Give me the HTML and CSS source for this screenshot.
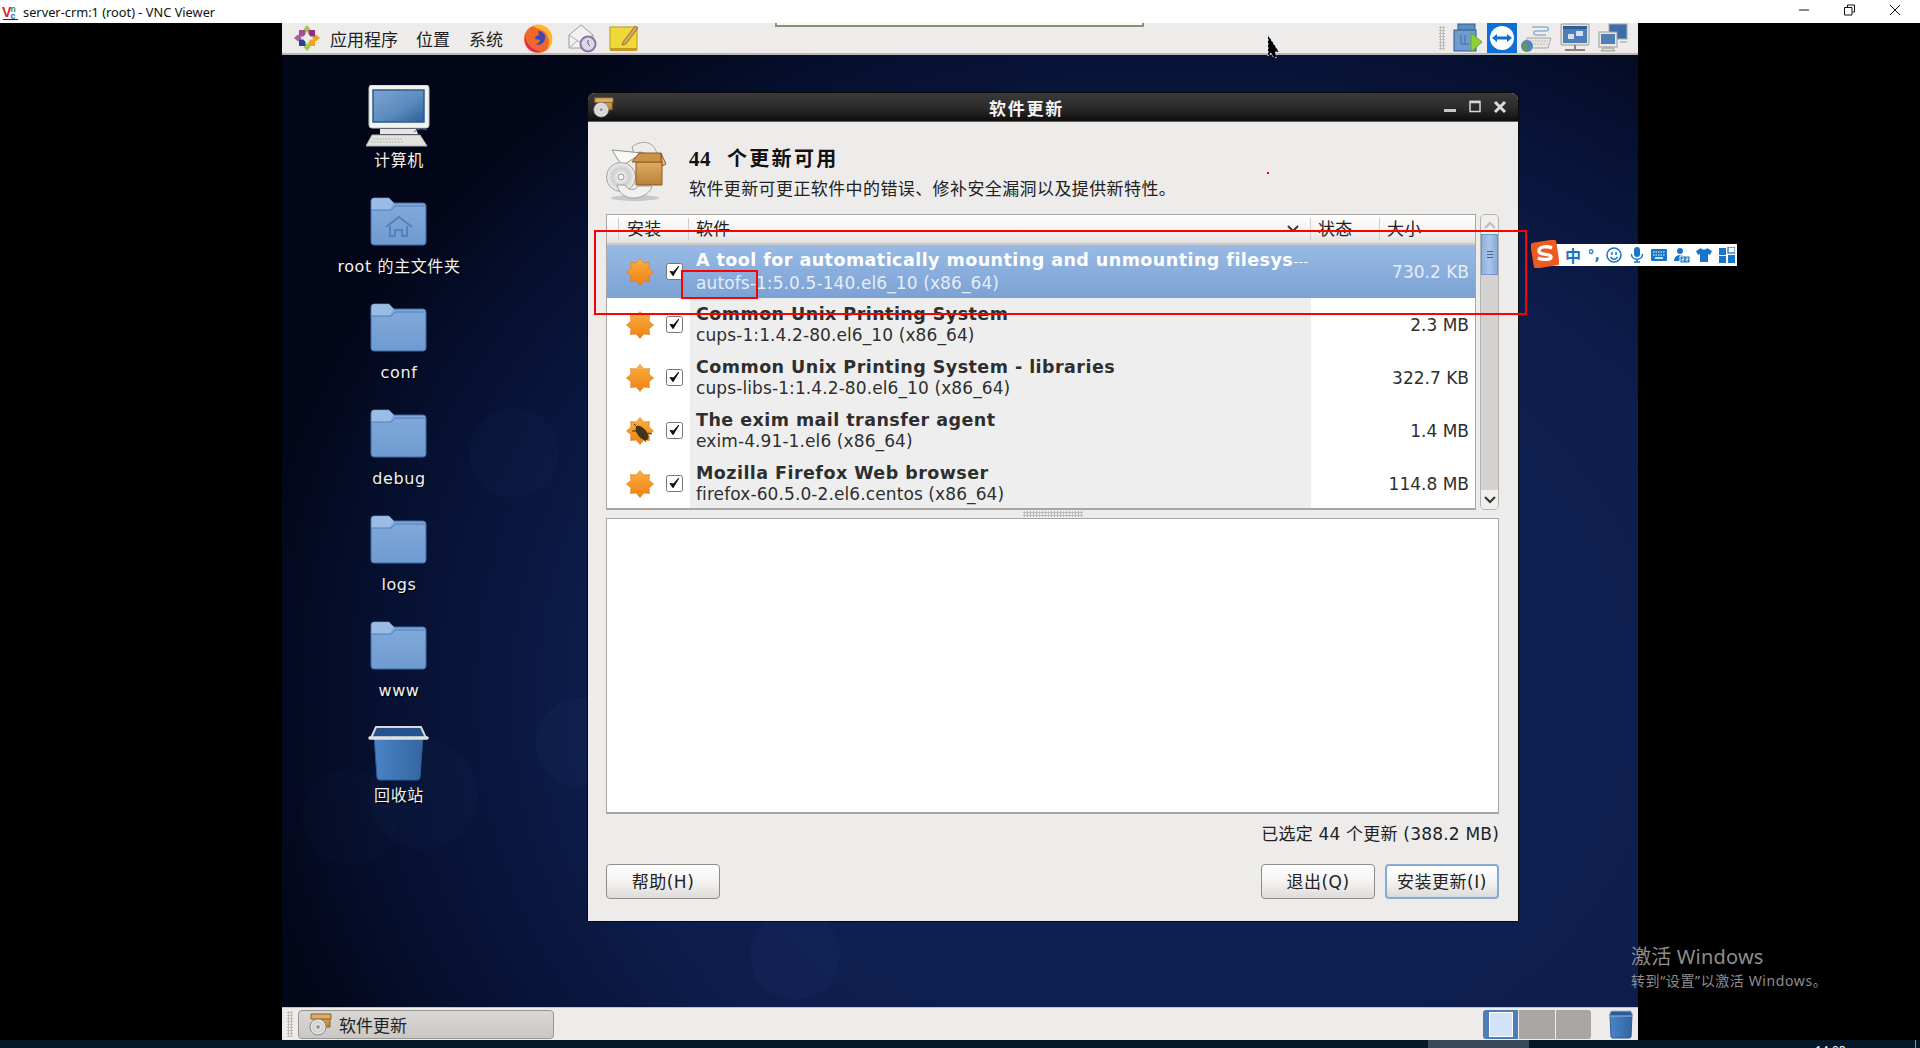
FILE: index.html
```html
<!DOCTYPE html>
<html lang="zh-CN">
<head>
<meta charset="utf-8">
<title>server-crm:1 (root) - VNC Viewer</title>
<link rel="stylesheet" href="styles.css">
</head>
<body>
<svg class="defs" width="0" height="0" aria-hidden="true">
  <defs>
    <linearGradient id="gFolder" x1="0" y1="0" x2="0" y2="1"><stop offset="0" stop-color="#84abdc"/><stop offset="1" stop-color="#6f9bd0"/></linearGradient>
    <linearGradient id="gStar" x1="0" y1="0" x2="0" y2="1"><stop offset="0" stop-color="#fbb040"/><stop offset="1" stop-color="#ef7f14"/></linearGradient>
    <linearGradient id="gScreen" x1="0" y1="0" x2="1" y2="1"><stop offset="0" stop-color="#7da3cf"/><stop offset="0.55" stop-color="#5d8cbe"/><stop offset="1" stop-color="#2c5f9a"/></linearGradient>
    <linearGradient id="gBox" x1="0" y1="0" x2="0" y2="1"><stop offset="0" stop-color="#e0ab62"/><stop offset="1" stop-color="#b9813b"/></linearGradient>
    <linearGradient id="gTrash" x1="0" y1="0" x2="1" y2="0"><stop offset="0" stop-color="#4a84c8"/><stop offset="1" stop-color="#34669f"/></linearGradient>
    <radialGradient id="gCd"><stop offset="0" stop-color="#fff"/><stop offset="0.6" stop-color="#cfcfcf"/><stop offset="1" stop-color="#f1f1f1"/></radialGradient>
    <symbol id="folder" viewBox="0 0 64 64">
      <path d="M5 10a3 3 0 0 1 3-3h15l5 5h29a3 3 0 0 1 3 3v36a3 3 0 0 1-3 3H8a3 3 0 0 1-3-3z" fill="url(#gFolder)" stroke="#3e6ba6"/>
      <path d="M5.500 19v-9a3 3 0 0 1 3-3h14l5 5-4 7h-16z" fill="#a3c3e8" opacity=".75"/>
      <path d="M6 19h19l4-4h30" fill="none" stroke="#4e7fba"/>
    </symbol>
    <symbol id="star" viewBox="0 0 28 30">
      <path d="M14 1.500L17.750 5.950 23.500 5.500 23.050 11.250 27.500 15 23.050 18.750 23.500 24.500 17.750 24.050 14 28.500 10.250 24.050 4.500 24.500 4.950 18.750 .5 15 4.950 11.250 4.500 5.500 10.250 5.950z" fill="url(#gStar)" stroke="#dc7412" stroke-width=".6"/>
    </symbol>
    <symbol id="pkg" viewBox="0 0 62 62">
      <ellipse cx="29" cy="58" rx="24" ry="3" fill="#000" opacity=".15"/>
      <path d="M26 7C34 0 48 0 51 14l-6 8C42 12 34 10 28 14z" fill="#ecece9" stroke="#a2a2a0"/>
      <path d="M6 10l30 3-20 13z" fill="#f8f8f7" stroke="#8f8f8d"/>
      <circle cx="15" cy="37" r="14.500" fill="url(#gCd)" stroke="#a0a0a0"/>
      <circle cx="15" cy="37" r="3" fill="#f4f4f4" stroke="#999"/>
      <path d="M11 45c2 9 10 14 18 13 9-1 16-6 17-12H32c-3 5-10 5-13-1z" fill="#f1f1ef" stroke="#a2a2a0"/>
      <path d="M30 22h26v23H30z" fill="url(#gBox)" stroke="#8a5d24"/>
      <path d="M26 22l7-9h22v9z" fill="#c99349" stroke="#8a5d24"/>
      <path d="M55 13l5 11-4 2v-4z" fill="#e8b977" stroke="#8a5d24"/>
    </symbol>
    <symbol id="pkgs" viewBox="0 0 24 24">
      <path d="M6 4h16v11H6z" fill="url(#gBox)" stroke="#8a5d24"/>
      <path d="M3 2h20v5H3z" fill="#e0ab62" stroke="#8a5d24"/>
      <circle cx="10" cy="15" r="8" fill="url(#gCd)" stroke="#888"/>
      <circle cx="10" cy="15" r="2" fill="#999"/>
    </symbol>
    <symbol id="check" viewBox="0 0 17 17">
      <rect x=".5" y=".5" width="16" height="16" rx="2" fill="#fff" stroke="#77756f"/>
      <path d="M4.200 8.500l2.800 4 5.500-9-4.800 5.600z" fill="#111" stroke="#111" stroke-width="1.100" stroke-linejoin="round"/>
    </symbol>
  </defs>
</svg>

<header class="vnc-bar">
  <svg class="vnc-logo" viewBox="0 0 18 18"><text x="0" y="14" class="vnc-v">V</text><text x="9" y="9" class="vnc-n">n</text><text x="9" y="16" class="vnc-c">c</text><path d="M1 17h16" stroke="#111"/></svg>
  <span class="vnc-title">server-crm:1 (root) - VNC Viewer</span>
  <div class="win-ctrls">
    <svg class="win-ctrl" viewBox="0 0 12 12"><path d="M1 6h10" stroke="#111"/></svg>
    <svg class="win-ctrl" viewBox="0 0 12 12"><path d="M3.500 3V1H10.500V8H8.500M.5 3.500H8V11H.5z" fill="none" stroke="#111"/></svg>
    <svg class="win-ctrl" viewBox="0 0 12 12"><path d="M1 1l10 10M11 1L1 11" stroke="#111"/></svg>
  </div>
</header>

<main class="remote">
  <nav class="top-panel">
    <svg class="ico-centos" viewBox="0 0 28 28">
      <path d="M14 1l3.500 4-3.500 4-3.500-4z" fill="#9ccc4b"/><path d="M14 27l3.500-4-3.500-4-3.500 4z" fill="#9ccc4b"/>
      <path d="M1 14l4-3.500 4 3.500-4 3.500z" fill="#a560a8"/><path d="M27 14l-4-3.500-4 3.500 4 3.500z" fill="#e7a61f"/>
      <path d="M6 6h6.500v4l-2 2.500H6z" fill="#a24c9a"/><path d="M22 6h-6.500v4l2 2.500H22z" fill="#932d7c"/>
      <path d="M6 22h6.500v-4l-2-2.500H6z" fill="#2f3f94"/><path d="M22 22h-6.500v-4l2-2.500H22z" fill="#e8a81c"/>
    </svg>
    <span class="menu menu-apps">应用程序</span>
    <span class="menu menu-places">位置</span>
    <span class="menu menu-system">系统</span>
    <svg class="ico-ff" viewBox="0 0 30 30">
      <circle cx="15" cy="16" r="14" fill="#f0672b"/>
      <path d="M9 3c8-4 16 0 20 10 1 6-1 11-5 14 4-8 2-18-8-21z" fill="#fcb72a"/>
      <path d="M15 8c5 0 8 4 7 8-1 5-6 7-10 5 3 0 5-2 5-4l-5-1 1-3c2 0 3-1 3-2z" fill="#3a4bb0"/>
      <path d="M2 12c1 9 7 16 16 16-6 3-15-1-16-11z" fill="#d9226e"/>
    </svg>
    <svg class="ico-mail" viewBox="0 0 30 30">
      <path d="M2 12L14 2l12 10v13H2z" fill="#f1f1ef" stroke="#9c9c9c"/>
      <path d="M2 12l12 8 12-8M2 25l9-8M26 25l-9-8" fill="none" stroke="#ababab"/>
      <circle cx="21" cy="21" r="7.500" fill="#ddd8e6" stroke="#8c72a3" stroke-width="2"/>
      <path d="M21 17v4l2 2" fill="none" stroke="#6b5480"/>
    </svg>
    <svg class="ico-note" viewBox="0 0 30 30">
      <rect x="1" y="4" width="27" height="22" fill="#efd83a" stroke="#b59c1c"/>
      <rect x="1" y="25" width="27" height="3" fill="#c89a25"/>
      <path d="M14 19l12-16 3 2-12 16-4 1z" fill="#d7a35b" stroke="#8a6430" stroke-width=".8"/>
    </svg>
    <span class="panel-fill"></span>
    <span class="handle"></span>
    <svg class="tray" viewBox="0 0 30 30">
      <rect x="5" y="1" width="17" height="17" fill="#5f8dc2" stroke="#2c5a96"/>
      <rect x="1" y="7" width="22" height="21" fill="#6f9bcf" stroke="#2c5a96"/>
      <path d="M8 12v9h8M12 12v9" fill="none" stroke="#3d6ea9"/>
      <path d="M18 10l11 9-11 10z" fill="#8fcf3c" stroke="#6aa527"/>
    </svg>
    <svg class="tray tray-tv" viewBox="0 0 30 30">
      <rect width="30" height="30" fill="#0e6fd6"/>
      <circle cx="15" cy="15" r="12" fill="#fff"/>
      <path d="M5 15l5-4v2.500h10V11l5 4-5 4v-2.500H10V19z" fill="#0e6fd6"/>
    </svg>
    <svg class="tray tray-wide" viewBox="0 0 32 30">
      <path d="M12 4h14c3 0 3 4 0 4H16c-3 0-3 4 0 4h10" fill="none" stroke="#8fb1d6" stroke-width="1.500"/>
      <path d="M7 15h24l-3 10H4z" fill="#e6e6e3" stroke="#a5a5a2"/>
      <path d="M9 18h19M8 21h19" stroke="#b8b8b5" stroke-dasharray="2 1"/>
      <circle cx="7" cy="23" r="6" fill="#4f87bb"/><path d="M3 21c3-2 5 0 4 3s2 2 3 1c-1 3-4 4-6 2z" fill="#6f9b3e"/>
    </svg>
    <svg class="tray" viewBox="0 0 30 30">
      <rect x="1" y="1" width="28" height="21" rx="1" fill="#e3e3e0" stroke="#9a9a97"/>
      <rect x="3" y="3" width="24" height="17" fill="#4f7eb6"/>
      <rect x="3" y="3" width="24" height="3" fill="#2f5d98"/>
      <rect x="8" y="11" width="6" height="5" fill="#d4e0ef"/><rect x="16" y="8" width="7" height="5" fill="#d4e0ef"/>
      <path d="M15 22v6M5 27h20" stroke="#85847f" stroke-width="2"/>
    </svg>
    <svg class="tray" viewBox="0 0 30 30">
      <rect x="11" y="1" width="18" height="15" fill="#3d6ea9" stroke="#a9a9a6"/>
      <rect x="1" y="9" width="18" height="15" fill="#e8e8e5" stroke="#9a9a97"/>
      <rect x="3" y="11" width="14" height="10" fill="#4f7eb6"/>
      <path d="M3 28h14l-2-3H5zM22 19h7" fill="#dcdcd9" stroke="#9a9a97"/>
    </svg>
  </nav>

  <section class="desktop">
    <ul class="icons">
      <li class="icon">
        <svg class="ico64" viewBox="0 0 64 64">
          <rect x="3" y="0" width="60" height="43" rx="3" fill="#f3f3f1" stroke="#c6c6c4"/>
          <rect x="7" y="5" width="51" height="32" fill="url(#gScreen)" stroke="#2e5a93" stroke-width="1.500"/>
          <path d="M14 44h36l2 5H14z" fill="#e6e6e3"/>
          <path d="M6 50h48l7 11H0z" fill="#e2e2df" stroke="#b0b0ad"/>
          <path d="M7 54h30M5 57h32" stroke="#b6b6b2" stroke-dasharray="2 1"/>
          <path d="M48 47c3-3 8-4 13-2" fill="none" stroke="#46689c"/>
        </svg>
        <span class="icon-label">计算机</span>
      </li>
      <li class="icon">
        <svg class="ico64" viewBox="0 0 64 64">
          <use href="#folder"/>
          <path d="M20 36l13-10 13 10M24 35v10h5v-6h7v6h5V35" fill="none" stroke="#4f82bf" stroke-width="2"/>
        </svg>
        <span class="icon-label">root 的主文件夹</span>
      </li>
      <li class="icon"><svg class="ico64"><use href="#folder"/></svg><span class="icon-label">conf</span></li>
      <li class="icon"><svg class="ico64"><use href="#folder"/></svg><span class="icon-label">debug</span></li>
      <li class="icon"><svg class="ico64"><use href="#folder"/></svg><span class="icon-label">logs</span></li>
      <li class="icon"><svg class="ico64"><use href="#folder"/></svg><span class="icon-label">www</span></li>
      <li class="icon">
        <svg class="ico64" viewBox="0 0 64 64">
          <path d="M8 15h49l-3 43a3 3 0 0 1-3 2H14a3 3 0 0 1-3-2z" fill="url(#gTrash)" stroke="#2f5d98"/>
          <path d="M10 7h45l5 11H5z" fill="#24528f" stroke="#d9d9d6" stroke-width="2"/>
          <path d="M4 18h57" stroke="#e2e2df" stroke-width="3.500" stroke-linecap="round"/>
        </svg>
        <span class="icon-label">回收站</span>
      </li>
    </ul>

    <article class="window">
      <div class="titlebar">
        <svg class="title-ico"><use href="#pkgs"/></svg>
        <span class="title-text">软件更新</span>
        <div class="title-ctrls">
          <svg class="tc" viewBox="0 0 14 14"><rect x="1" y="9" width="12" height="3" fill="#c8c8c8"/></svg>
          <svg class="tc" viewBox="0 0 14 14"><path d="M2 1.500h10v10H2z" fill="none" stroke="#d8d8d8" stroke-width="1.500"/><path d="M2 2h10" stroke="#d8d8d8" stroke-width="2.500"/></svg>
          <svg class="tc" viewBox="0 0 14 14"><path d="M2 2l10 10M12 2L2 12" stroke="#dcdcdc" stroke-width="3"/></svg>
        </div>
      </div>
      <div class="win-body">
        <div class="hero">
          <svg class="hero-ico"><use href="#pkg"/></svg>
          <div class="hero-text">
            <h1 class="hero-title"><span class="hero-num">44</span>个更新可用</h1>
            <p class="hero-sub">软件更新可更正软件中的错误、修补安全漏洞以及提供新特性。</p>
          </div>
        </div>

        <div class="list-wrap">
          <div class="tree">
            <div class="tree-head">
              <span class="th th-install">安装</span>
              <span class="th th-soft">软件<svg class="sort" viewBox="0 0 12 8"><path d="M1 1l5 5 5-5" fill="none" stroke="#333" stroke-width="1.800"/></svg></span>
              <span class="th th-state">状态</span>
              <span class="th th-size">大小</span>
            </div>
            <div class="row selected">
              <div class="cell-ic"><svg class="star"><use href="#star"/></svg><svg class="cb"><use href="#check"/></svg></div>
              <div class="cell-sw"><b class="pkg-name">A tool for automatically mounting and unmounting filesys<span class="ell">---</span></b><span class="pkg-ver">autofs-1:5.0.5-140.el6_10 (x86_64)</span></div>
              <div class="cell-sz">730.2 KB</div>
            </div>
            <div class="row">
              <div class="cell-ic"><svg class="star"><use href="#star"/></svg><svg class="cb"><use href="#check"/></svg></div>
              <div class="cell-sw"><b class="pkg-name">Common Unix Printing System</b><span class="pkg-ver">cups-1:1.4.2-80.el6_10 (x86_64)</span></div>
              <div class="cell-sz">2.3 MB</div>
            </div>
            <div class="row">
              <div class="cell-ic"><svg class="star"><use href="#star"/></svg><svg class="cb"><use href="#check"/></svg></div>
              <div class="cell-sw"><b class="pkg-name">Common Unix Printing System - libraries</b><span class="pkg-ver">cups-libs-1:1.4.2-80.el6_10 (x86_64)</span></div>
              <div class="cell-sz">322.7 KB</div>
            </div>
            <div class="row">
              <div class="cell-ic"><svg class="star" viewBox="0 0 28 30"><use href="#star"/><g fill="#3f3420" stroke="#3f3420"><ellipse cx="16" cy="17" rx="4" ry="8" transform="rotate(-40 16 17)"/><path d="M8 8l4 4M6 15l5 0M20 26l-3-4M26 18l-4-1" fill="none"/></g></svg><svg class="cb"><use href="#check"/></svg></div>
              <div class="cell-sw"><b class="pkg-name">The exim mail transfer agent</b><span class="pkg-ver">exim-4.91-1.el6 (x86_64)</span></div>
              <div class="cell-sz">1.4 MB</div>
            </div>
            <div class="row">
              <div class="cell-ic"><svg class="star"><use href="#star"/></svg><svg class="cb"><use href="#check"/></svg></div>
              <div class="cell-sw"><b class="pkg-name">Mozilla Firefox Web browser</b><span class="pkg-ver">firefox-60.5.0-2.el6.centos (x86_64)</span></div>
              <div class="cell-sz">114.8 MB</div>
            </div>
          </div>
          <div class="scrollbar">
            <div class="sb-btn"><svg class="sb-arrow" viewBox="0 0 12 8"><path d="M1 7l5-5 5 5" fill="none" stroke="#bdbcba" stroke-width="2"/></svg></div>
            <div class="sb-thumb"><i></i><i></i><i></i></div>
            <div class="sb-trough"></div>
            <div class="sb-btn"><svg class="sb-arrow" viewBox="0 0 12 8"><path d="M1 1l5 5 5-5" fill="none" stroke="#333" stroke-width="2"/></svg></div>
          </div>
        </div>

        <div class="pane-handle"><span class="pane-dots"></span></div>
        <div class="details"></div>
        <div class="summary">已选定 44 个更新 (388.2 MB)</div>
        <div class="actions">
          <button class="btn">帮助(H)</button>
          <span class="panel-fill"></span>
          <button class="btn">退出(Q)</button>
          <button class="btn btn-focus">安装更新(I)</button>
        </div>
      </div>
    </article>
  </section>

  <footer class="bottom-panel">
    <span class="handle handle-low"></span>
    <div class="task">
      <svg class="task-ico"><use href="#pkgs"/></svg>
      <span class="task-text">软件更新</span>
    </div>
    <span class="panel-fill"></span>
    <div class="pager">
      <span class="ws ws-on"><i></i></span>
      <span class="ws"></span>
      <span class="ws"></span>
    </div>
    <svg class="trash-mini" viewBox="0 0 26 30">
      <path d="M2 6h22l-1 22a2 2 0 0 1-2 1H5a2 2 0 0 1-2-1z" fill="url(#gTrash)" stroke="#2f5d98"/>
      <path d="M3 2h20l2 5H1z" fill="#2a5a98" stroke="#9fb7d3"/>
    </svg>
  </footer>
</main>

<div class="win-strip">
  <span class="strip-active"></span>
  <span class="strip-clock">14:08</span>
  <span class="strip-edge"></span>
</div>

<!-- overlays that sit on top of the remote session -->
<div class="vnc-tab"></div>
<svg class="cursor" viewBox="0 0 13 25"><path d="M1 1v21l3-3 3 5 3-1-2-5h4z" fill="#000" stroke="#fff" stroke-width=".8" stroke-dasharray="2 2"/></svg>
<span class="red-dot"></span>
<div class="mark mark-row"></div>
<div class="mark mark-name"></div>

<div class="activate">
  <div class="act-1">激活 Windows</div>
  <div class="act-2">转到“设置”以激活 Windows。</div>
</div>

<div class="sogou">
  <svg class="sg-logo" viewBox="0 0 28 28">
    <rect x="1" y="1" width="26" height="26" rx="3" transform="rotate(-9 14 14)" fill="#ee5a22"/>
    <path d="M21 8c-4-2-13-2-13 3 0 5 12 2 12 6 0 3-8 3-13 1" fill="none" stroke="#fff" stroke-width="3.400"/>
  </svg>
  <span class="sg-zh">中</span>
  <span class="sg-punct">°,</span>
  <svg class="sg" viewBox="0 0 16 16"><circle cx="8" cy="8" r="7" fill="none" stroke="#1a75c9" stroke-width="1.500"/><path d="M6 5v3M10 5v3" stroke="#1a75c9" stroke-width="1.500"/><path d="M4.500 10c2 3 5 3 7 0" fill="none" stroke="#1a75c9" stroke-width="1.500"/></svg>
  <svg class="sg" viewBox="0 0 16 16"><rect x="5" y="0" width="6" height="10" rx="3" fill="#1a75c9"/><path d="M2.500 7c0 7 11 7 11 0M8 12v3M5 15h6" fill="none" stroke="#1a75c9" stroke-width="1.500"/></svg>
  <svg class="sg" viewBox="0 0 16 16"><rect x="0" y="2" width="16" height="12" rx="1" fill="#1a75c9"/><path d="M2 5h12M2 8h12" stroke="#fff" stroke-dasharray="1.500 1"/><path d="M4 11h8" stroke="#fff" stroke-width="1.500"/></svg>
  <svg class="sg" viewBox="0 0 16 16"><circle cx="6" cy="4" r="3" fill="#1a75c9"/><path d="M0 14c0-8 12-8 12 0z" fill="#1a75c9"/><rect x="6" y="9" width="10" height="7" fill="#1a75c9" stroke="#fff"/><path d="M8 11h2v1.500H8V14h2M12 11h2v1.500h-2V14h2" fill="none" stroke="#fff" stroke-width=".8"/></svg>
  <svg class="sg" viewBox="0 0 16 16"><path d="M5 1L0 4l2 4 2-1v8h8V7l2 1 2-4-5-3c-1 2-5 2-6 0z" fill="#1a75c9"/></svg>
  <svg class="sg" viewBox="0 0 16 16"><rect x="0" y="1" width="7" height="7" fill="#1a75c9"/><rect x="9" y="0" width="7" height="6" fill="none" stroke="#1a75c9" stroke-width="1.300"/><rect x="0" y="9" width="7" height="7" fill="#1a75c9"/><rect x="9" y="8" width="7" height="8" fill="#1a75c9"/></svg>
</div>
</body>
</html>
```
FILE: styles.css
```css
* { box-sizing: border-box; }
html, body { margin: 0; padding: 0; }
body {
  width: 1920px;
  height: 1048px;
  overflow: hidden;
  position: relative;
  background: #000;
  display: flex;
  flex-direction: column;
  font-family: "DejaVu Sans", "Noto Sans CJK SC", sans-serif;
  color: #2e2e2e;
}
.defs { position: absolute; }
h1, p, ul { margin: 0; padding: 0; }
ul { list-style: none; }

/* VNC viewer chrome */
.vnc-bar {
  height: 23px;
  flex: none;
  background: #fff;
  display: flex;
  align-items: center;
  padding-left: 2px;
}
.vnc-logo { width: 17px; height: 18px; flex: none; }
.vnc-v { font: bold 15px "Liberation Sans", sans-serif; fill: #d8262c; }
.vnc-n { font: bold 9px "Liberation Sans", sans-serif; fill: #1c9a3c; }
.vnc-c { font: bold 9px "Liberation Sans", sans-serif; fill: #1f5fd0; }
.vnc-title {
  margin-left: 4px;
  font: 12.800px "Noto Sans", "Open Sans", sans-serif;
  color: #111;
}
.win-ctrls { margin-left: auto; display: flex; gap: 33.500px; padding-right: 19px; }
.win-ctrl { width: 12px; height: 12px; margin-top: -3px; }

.remote {
  width: 1356px;
  height: 1017px;
  flex: none;
  margin-left: 282px;
  display: flex;
  flex-direction: column;
}

/* Top panel */
.top-panel {
  height: 32px;
  flex: none;
  background: #edeceb;
  border-bottom: 2px solid #b9b8b6;
  display: flex;
  align-items: center;
  padding-left: 11px;
}
.ico-centos { width: 28px; height: 28px; flex: none; }
.menu { font-size: 17px; color: #222; white-space: nowrap; }
.menu-apps { margin-left: 9px; }
.menu-places { margin-left: 18px; }
.menu-system { margin-left: 19px; }
.ico-ff { width: 30px; height: 30px; margin-left: 20px; flex: none; }
.ico-mail { width: 30px; height: 30px; margin-left: 14px; flex: none; }
.ico-note { width: 30px; height: 30px; margin-left: 12px; flex: none; }
.panel-fill { flex: 1; }
.handle {
  width: 6px;
  height: 24px;
  flex: none;
  background-image: radial-gradient(#bdbcba 1px, transparent 1.2px);
  background-size: 3px 3px;
}
.tray { width: 30px; height: 30px; margin-left: 8px; flex: none; }
.tray-tv { margin-left: 4px; }
.tray-wide { width: 32px; margin-left: 3px; }
.top-panel .tray:last-child { margin-right: 10px; }

/* Desktop */
.desktop {
  flex: 1;
  position: relative;
  overflow: hidden;
  background:
    radial-gradient(circle 45px at 232px 398px, rgba(120,150,230,.025) 98%, transparent),
    radial-gradient(circle 45px at 513px 900px, rgba(120,150,230,.03) 98%, transparent),
    radial-gradient(circle 55px at 141px 740px, rgba(120,150,230,.025) 98%, transparent),
    radial-gradient(circle 48px at 68px 762px, rgba(120,150,230,.015) 98%, transparent),
    radial-gradient(circle 45px at 298px 688px, rgba(120,150,230,.03) 98%, transparent),
    radial-gradient(ellipse 950px 800px at 900px 640px, #10245a 0%, #0d1d4d 60%, #061030 85%, #030618 100%),
    #030618;
}
.icons {
  width: 160px;
  margin-left: 37px;
  padding-top: 30px;
  display: flex;
  flex-direction: column;
  gap: 18px;
}
.icon { display: flex; flex-direction: column; align-items: center; }
.icon:last-child { margin-top: -1px; }
.ico64 { width: 64px; height: 64px; display: block; margin-right: 2px; }
.icon-label {
  height: 24px;
  line-height: 23px;
  font-size: 16px;
  letter-spacing: .6px;
  color: #f2f2f2;
  white-space: nowrap;
  text-shadow: 1px 1px 1px #000;
}

/* Window */
.window {
  position: absolute;
  left: 306px;
  top: 38px;
  width: 930px;
  height: 828px;
  background: #edeceb;
  border-radius: 7px 7px 0 0;
  box-shadow: 0 0 0 1px #0a0a0a;
  display: flex;
  flex-direction: column;
}
.titlebar {
  height: 29px;
  flex: none;
  background: linear-gradient(#3a3a3a, #2a2a2a 55%, #0e0e0e);
  border-radius: 7px 7px 0 0;
  border-bottom: 1px solid #55606c;
  display: flex;
  align-items: center;
  padding: 0 11px 0 4px;
}
.title-ico { width: 22px; height: 22px; flex: none; }
.title-text {
  flex: 1;
  text-align: center;
  padding-right: 4px;
  font-size: 17px;
  font-weight: 700;
  letter-spacing: 1.800px;
  color: #f4f4f4;
}
.title-ctrls { display: flex; gap: 11px; }
.tc { width: 14px; height: 14px; }
.win-body { flex: 1; padding: 18px 19px 22px 18px; display: flex; flex-direction: column; }

.hero { height: 60px; display: flex; flex: none; }
.hero-ico { width: 62px; height: 62px; flex: none; }
.hero-text { margin-left: 21px; }
.hero-title { font-size: 20px; font-weight: 700; letter-spacing: 2.300px; color: #111; line-height: 26px; margin-top: 6px; }
.hero-num { margin-right: 16px; font-family: "Liberation Serif", "Noto Sans CJK SC", serif; font-size: 21px; letter-spacing: .5px; }
.hero-sub { font-size: 17px; letter-spacing: .4px; line-height: 24px; margin-top: 5px; color: #222; white-space: nowrap; }

.list-wrap { height: 296px; margin-top: 14px; flex: none; display: flex; gap: 4px; }
.tree {
  flex: 1;
  background: #fff;
  border: 1px solid #a8a6a3;
  border-bottom-width: 2px;
  overflow: hidden;
}
.tree-head {
  height: 30px;
  display: grid;
  grid-template-columns: 81px 622px 69px 95px;
  align-items: center;
  background: linear-gradient(#fff, #f0efee 70%, #e2e1df);
  border-bottom: 2px solid #c9c8c6;
}
.th {
  height: 22px;
  line-height: 22px;
  font-size: 17px;
  letter-spacing: .3px;
  color: #222;
  display: flex;
  align-items: center;
  border-left: 1px solid #cfcecc;
  padding-left: 7px;
}
.th-install { margin-left: 11px; padding-left: 8px; }
.th-soft { padding-right: 11px; justify-content: space-between; }
.sort { width: 12px; height: 8px; }
.row {
  height: 53px;
  display: grid;
  grid-template-columns: 83px 621px 163px;
}
.cell-ic { display: flex; align-items: center; padding-left: 19px; gap: 12px; }
.star { width: 28px; height: 30px; flex: none; }
.cb { width: 17px; height: 17px; flex: none; }
.cell-sw {
  background: #eeeeee;
  padding-left: 6px;
  display: flex;
  flex-direction: column;
  justify-content: center;
  white-space: nowrap;
  overflow: hidden;
}
.pkg-name { font-size: 17.500px; font-weight: 700; line-height: 22px; letter-spacing: .45px; }
.ell { font-weight: 400; font-size: 13px; }
.pkg-ver { font-size: 17px; line-height: 21px; letter-spacing: .1px; }
.cell-sz { display: flex; align-items: center; justify-content: flex-end; padding-right: 5px; font-size: 17px; }
.selected { background: linear-gradient(#99bae5, #7ba2d4); color: #fff; }
.selected .cell-sw { background: transparent; }
.selected .pkg-ver, .selected .cell-sz { color: #e6edf7; }

.scrollbar {
  width: 19px;
  flex: none;
  display: flex;
  flex-direction: column;
  background: #d4d3d1;
  border: 1px solid #b4b3b0;
  border-radius: 5px;
  overflow: hidden;
}
.sb-btn { height: 19px; flex: none; background: #f0efee; display: flex; align-items: center; justify-content: center; }
.sb-arrow { width: 12px; height: 8px; }
.sb-thumb {
  height: 41px;
  flex: none;
  background: linear-gradient(90deg, #8fb2e0, #a9c5ea 50%, #86aada);
  border: 1px solid #6f96c9;
  display: flex;
  flex-direction: column;
  align-items: center;
  justify-content: center;
  gap: 2px;
}
.sb-thumb i { width: 6px; height: 1px; background: #44607f; }
.sb-trough { flex: 1; }

.pane-handle { height: 8px; flex: none; display: flex; justify-content: center; align-items: center; }
.pane-dots {
  width: 60px;
  height: 6px;
  background-image: radial-gradient(#bdbcba 1px, transparent 1.2px);
  background-size: 3px 3px;
}
.details { height: 296px; flex: none; background: #fff; border: 1px solid #a8a6a3; border-bottom-width: 2px; }
.summary { height: 38px; flex: none; line-height: 40px; text-align: right; font-size: 17px; letter-spacing: .2px; color: #222; white-space: nowrap; }
.actions { margin-top: 12px; height: 35px; display: flex; gap: 10px; flex: none; }
.btn {
  width: 114px;
  height: 35px;
  padding: 0 0 2px;
  font: 17px "DejaVu Sans", "Noto Sans CJK SC", sans-serif;
  letter-spacing: .5px;
  color: #222;
  background: linear-gradient(#fff, #f4f3f2 50%, #dedcda);
  border: 1px solid #8f8d8a;
  border-radius: 4px;
}
.btn-focus { border: 2px solid #86a9d6; }

/* Bottom panel */
.bottom-panel {
  height: 33px;
  flex: none;
  background: #edeceb;
  border-top: 1px solid #c4c3c1;
  display: flex;
  align-items: center;
  padding-left: 5px;
}
.handle-low { width: 6px; height: 26px; }
.task {
  width: 256px;
  height: 29px;
  margin-left: 5px;
  flex: none;
  background: linear-gradient(#d8d7d5, #c9c8c5);
  border: 1px solid #96958f;
  border-radius: 4px;
  display: flex;
  align-items: center;
  padding-left: 9px;
}
.task-ico { width: 24px; height: 24px; flex: none; }
.task-text { margin-left: 7px; font-size: 17px; color: #222; }
.pager {
  width: 108px;
  height: 29px;
  flex: none;
  display: flex;
  gap: 1px;
  background: #edeceb;
  border-radius: 3px;
  overflow: hidden;
}
.ws { flex: 1; background: #a8a5a2; }
.ws-on { background: #4f7db5; display: flex; align-items: center; justify-content: center; }
.ws-on i { width: 24px; height: 25px; background: #d3e3f7; border: 1px solid #fff; }
.trash-mini { width: 26px; height: 30px; margin: 0 4px 0 17px; flex: none; }

/* Host task bar sliver */
.win-strip {
  height: 8px;
  flex: none;
  background: #051829;
  display: flex;
  overflow: hidden;
  position: relative;
}
.strip-active { width: 101px; margin-left: 1428px; background: #38495c; }
.strip-clock { margin-left: 286px; font: 12px "Noto Sans", sans-serif; color: #fff; line-height: 12px; padding-top: 5px; }
.strip-edge { width: 1px; margin-left: 69px; background: #8a99a8; }

/* Overlays */
.vnc-tab {
  position: absolute;
  left: 775px;
  top: 23px;
  width: 369px;
  height: 4px;
  background: #fdfbd8;
  border: 2px solid #8a8a88;
  border-top: 0;
}
.cursor { position: absolute; left: 1267px; top: 34px; width: 13px; height: 25px; }
.red-dot { position: absolute; left: 1267px; top: 172px; width: 2px; height: 2px; background: #f00; }
.mark { position: absolute; border: 2px solid #f00; }
.mark-row { left: 594px; top: 230px; width: 933px; height: 85px; }
.mark-name { left: 681px; top: 270px; width: 77px; height: 29px; }

.activate { position: absolute; left: 1631px; top: 943px; color: #8e8e8e; white-space: nowrap; font-family: "Noto Sans", "Noto Sans CJK SC", sans-serif; }
.act-1 { font-size: 20px; line-height: 28px; letter-spacing: .2px; }
.act-2 { font-size: 14px; line-height: 20px; letter-spacing: .6px; }

.sogou {
  position: absolute;
  left: 1541px;
  top: 244px;
  width: 196px;
  height: 22px;
  background: #fff;
  display: flex;
  align-items: center;
  padding-left: 24px;
  gap: 6.500px;
}
.sg-logo { position: absolute; left: -10px; top: -4px; width: 28px; height: 28px; }
.sg-zh { font: 700 16px "Noto Sans CJK SC", sans-serif; color: #1a75c9; }
.sg-punct { font: 700 14px "DejaVu Sans", sans-serif; color: #1a75c9; width: 12px; }
.sg { width: 16px; height: 16px; flex: none; }
```
